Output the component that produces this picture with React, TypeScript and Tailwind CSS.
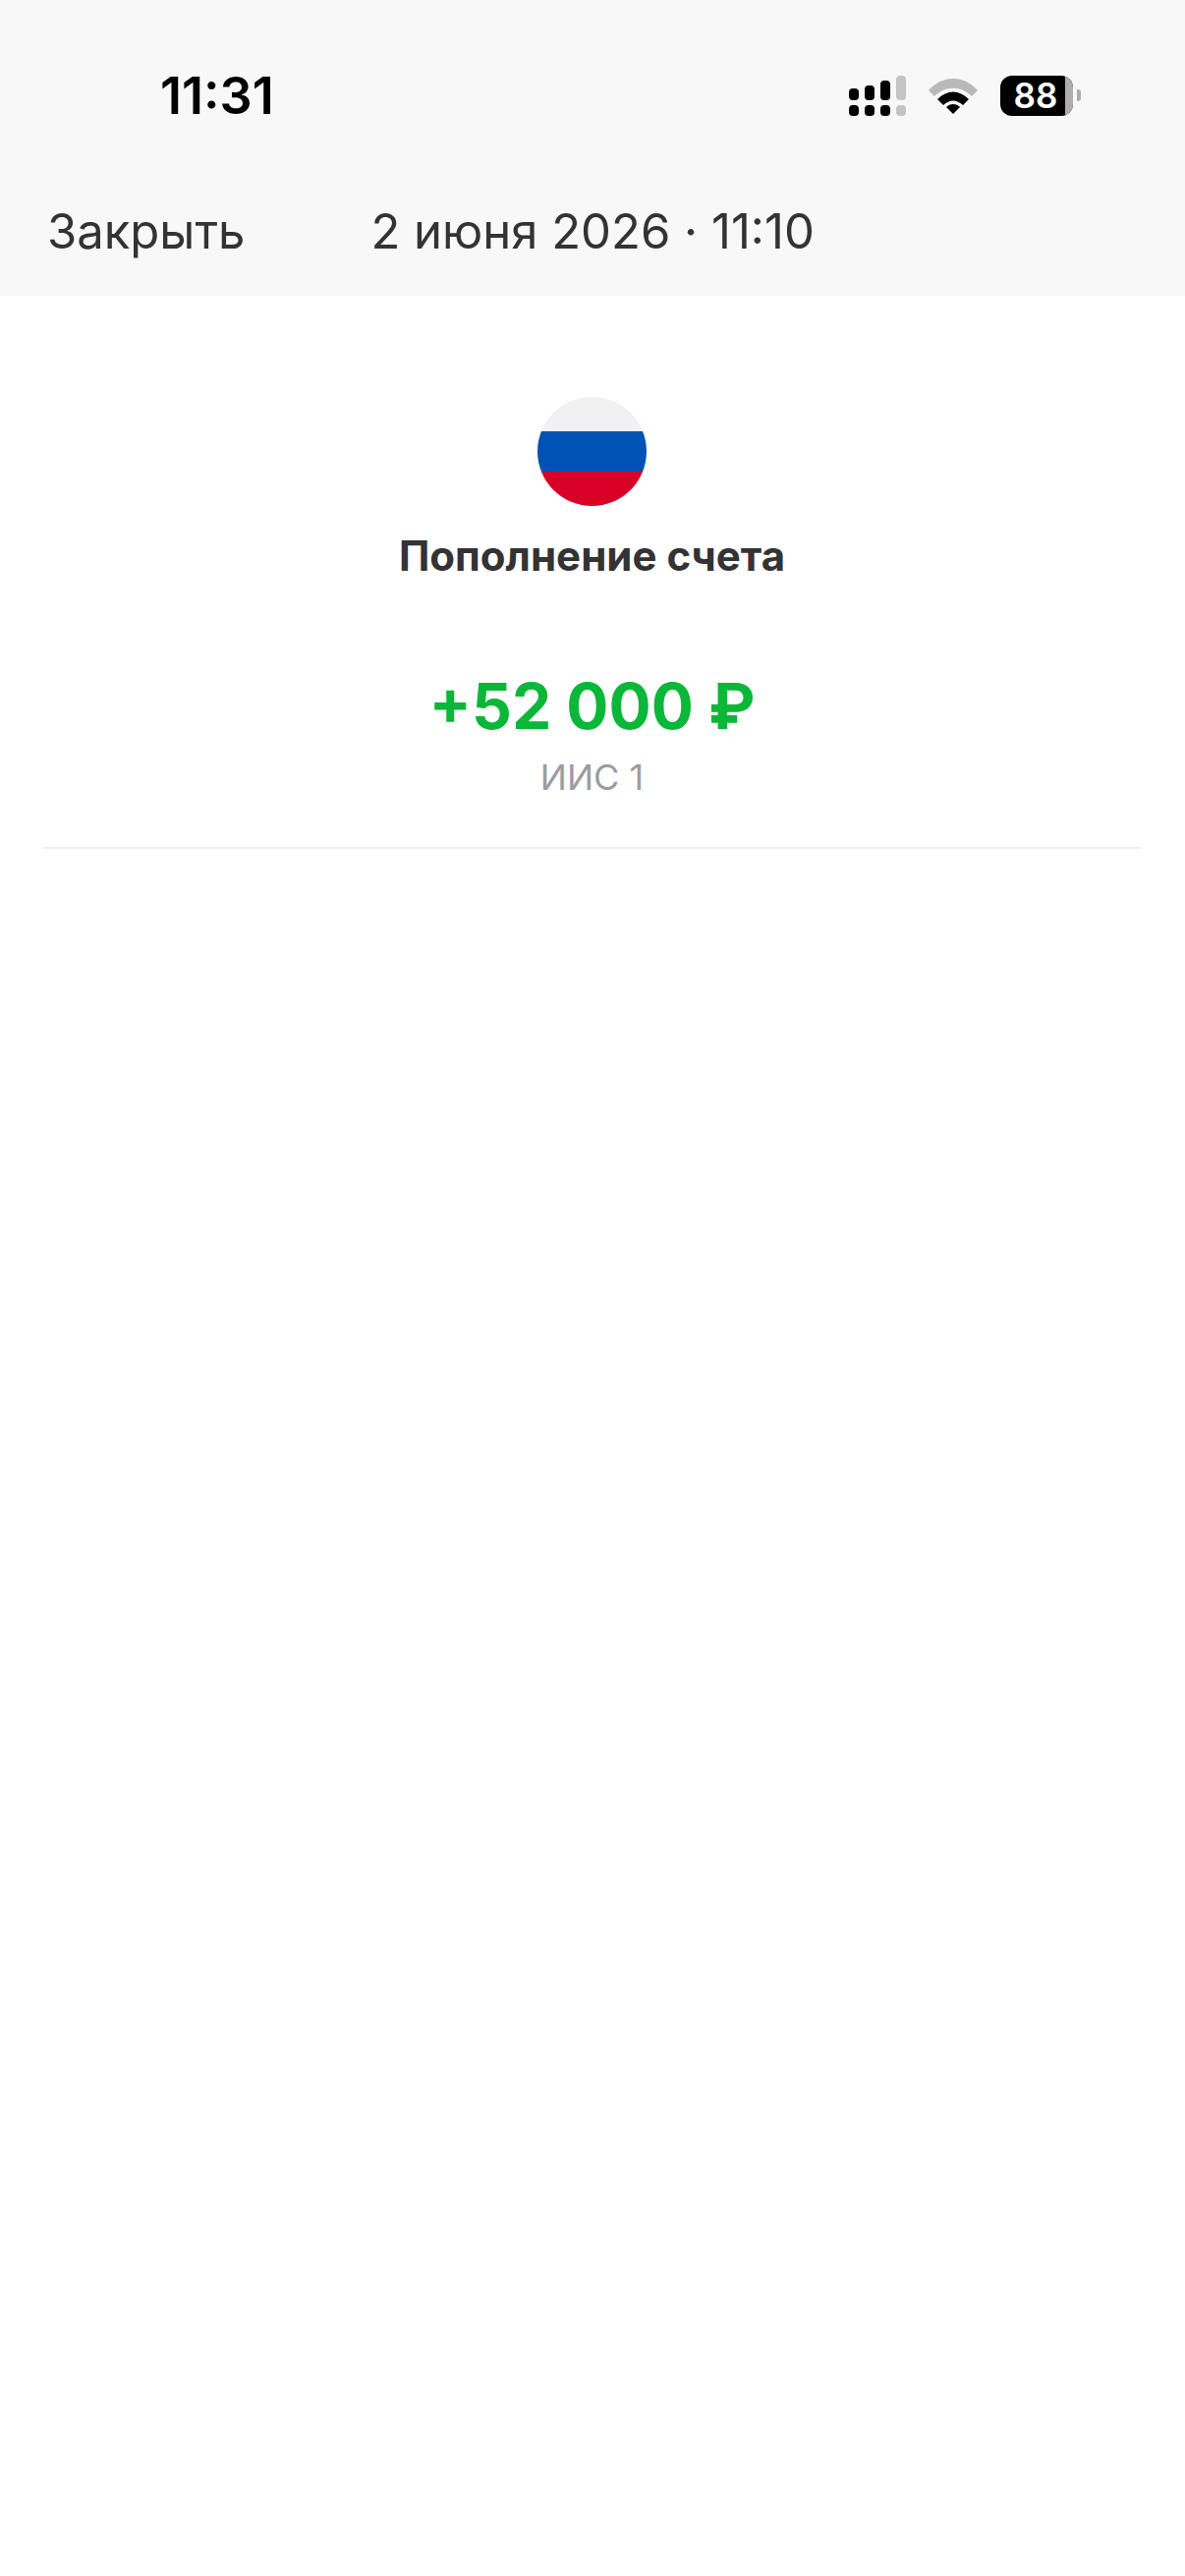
export default function App() {
  const font = { fontFamily: "Inter, 'Noto Sans', sans-serif" };
  return (
    <div className="w-[1206px] h-[2622px] bg-white overflow-hidden flex flex-col" style={font}>
      <header className="bg-[#f8f8f8] h-[301px] flex flex-col shrink-0">
        <div className="flex items-center justify-between h-[60px] mt-[68px] pl-[163px] pr-[106px]">
          <span className="text-[52px] leading-[60px] font-semibold text-black">11:31</span>
          <div className="flex items-center -translate-y-[1px]">
            <svg width="58" height="41" viewBox="0 0 58 41" className="block">
              <rect x="0" y="13" width="10" height="12" rx="4" fill="#000" />
              <rect x="16" y="10" width="10" height="15" rx="4" fill="#000" />
              <rect x="32" y="5" width="10" height="20" rx="4" fill="#000" />
              <rect x="48" y="0" width="10" height="25" rx="4" fill="#c4c4c4" />
              <rect x="0" y="30" width="10" height="11" rx="4" fill="#000" />
              <rect x="16" y="30" width="10" height="11" rx="4" fill="#000" />
              <rect x="32" y="30" width="10" height="11" rx="4" fill="#000" />
              <rect x="48" y="30" width="10" height="11" rx="4" fill="#c4c4c4" />
            </svg>
            <svg width="52" height="38" viewBox="0 0 52 38" className="block ml-[22px]">
              <path d="M1 14 C15 -2 37 -2 51 14 L45 20 C34 9 18 9 7 20 Z" fill="#b9b9b9" />
              <path d="M10 23 C20 13 32 13 42 23 L36 29 C29 23 23 23 16 29 Z" fill="#000" />
              <path d="M19 31 C23 27 29 27 33 31 L26 38 Z" fill="#000" />
            </svg>
            <div className="relative ml-[22px] w-[74px] h-[41px] rounded-[12px] bg-black overflow-hidden flex items-center justify-center">
              <span className="text-[35px] leading-[41px] font-semibold text-white pr-[2px]">88</span>
              <div className="absolute right-0 top-0 bottom-0 w-[8px] bg-[#adadad]" />
            </div>
            <div className="ml-[4px] w-[4px] h-[12px] rounded-r-[3px] bg-[#adadad]" />
          </div>
        </div>
        <div className="flex items-center h-[60px] mt-[78px] pl-[48px]">
          <span className="text-[49px] leading-[60px] text-[#333333]">Закрыть</span>
          <span className="text-[49px] leading-[60px] text-[#333333] ml-[128px]">2 июня 2026 · 11:10</span>
        </div>
      </header>
      <main className="flex flex-col items-center pr-[1px]">
        <div className="mt-[103px] w-[111px] h-[111px] rounded-full overflow-hidden flex flex-col">
          <div className="h-[35px] bg-[#f0f0f0]" />
          <div className="h-[41px] bg-[#0052b4]" />
          <div className="h-[35px] bg-[#d80027]" />
        </div>
        <div className="mt-[26px] text-[42px] leading-[50px] font-bold text-[#333333]">Пополнение счета</div>
        <div className="mt-[89px] text-[64px] leading-[78px] font-bold text-[#0bb738]">+52 000 ₽</div>
        <div className="mt-[11px] text-[36px] leading-[44px] text-[#9a9ca3]">ИИС 1</div>
        <div className="mt-[49px] w-[1115px] h-[2px] bg-[#eeeeee]" />
      </main>
    </div>
  );
}
